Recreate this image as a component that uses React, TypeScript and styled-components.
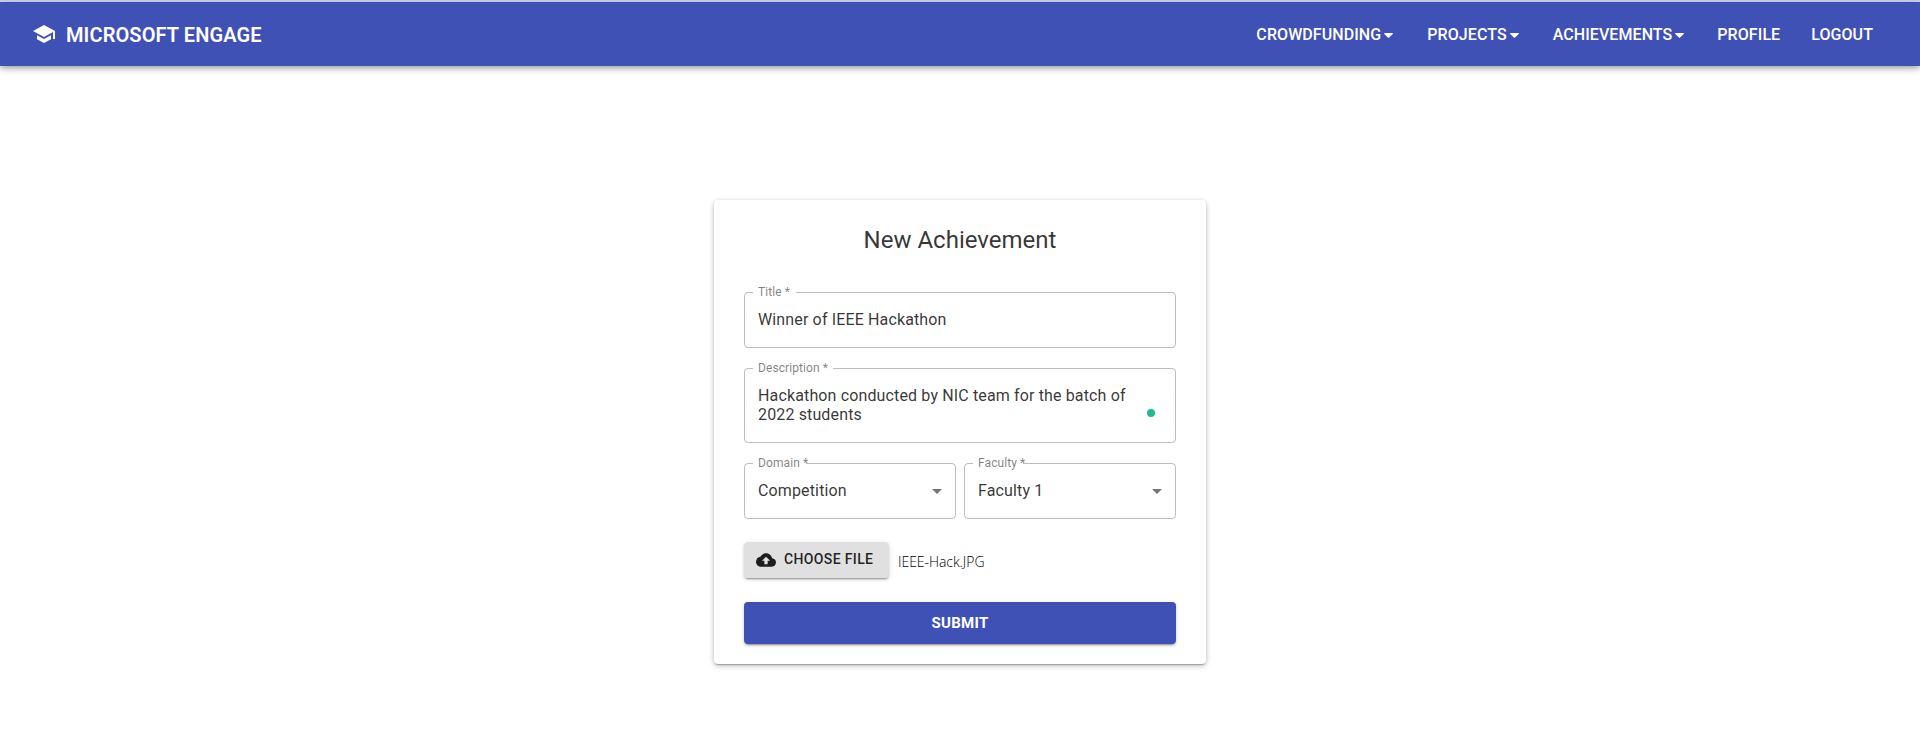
import React from 'react';
import styled, { createGlobalStyle } from 'styled-components';

const GlobalStyle = createGlobalStyle`
  *, *::before, *::after { box-sizing: border-box; }
  body {
    margin: 0;
    background: #fff;
    color: rgba(0, 0, 0, 0.8);
    font-family: Roboto, "Liberation Sans", sans-serif;
  }
`;

const Page = styled.div`
  min-height: 754px;
  border-top: 2px solid #cbd3e8;
`;

const AppBar = styled.header`
  display: flex;
  align-items: center;
  justify-content: space-between;
  height: 64px;
  padding: 0 47px 0 32px;
  background: #3f51b5;
  color: #fff;
  box-shadow: 0 2px 4px -1px rgba(0, 0, 0, 0.2), 0 4px 5px 0 rgba(0, 0, 0, 0.14),
    0 1px 10px 0 rgba(0, 0, 0, 0.12);
`;

const Brand = styled.div`
  display: flex;
  align-items: center;
  gap: 10px;
  font-size: 20px;
  font-weight: 600;
  line-height: 24px;
  letter-spacing: 0.1px;
  white-space: nowrap;
`;

const BrandName = styled.span`
  padding-top: 2px;
`;

const Nav = styled.nav`
  display: flex;
  align-items: center;
  padding-top: 2px;
`;

const NavLink = styled.a<{ $gap: number }>`
  display: flex;
  align-items: center;
  gap: 3px;
  margin-left: ${({ $gap }) => $gap}px;
  font-size: 16px;
  font-weight: 500;
  line-height: 24px;
  letter-spacing: 0.08px;
  white-space: nowrap;
`;

const Card = styled.form`
  display: flex;
  flex-direction: column;
  width: 492px;
  height: 464px;
  margin: 134px auto 0;
  padding: 20px 30px;
  border-radius: 4px;
  background: #fff;
  box-shadow: 0 2px 1px -1px rgba(0, 0, 0, 0.2), 0 1px 3px 0 rgba(0, 0, 0, 0.14),
    0 2px 6px 0 rgba(0, 0, 0, 0.2);
`;

const Heading = styled.h1`
  margin: 4px 0 36px;
  font-size: 24px;
  font-weight: 400;
  line-height: 32px;
  text-align: center;
`;

const Row = styled.div<{ $gap: number; $top: number }>`
  display: flex;
  gap: ${({ $gap }) => $gap}px;
  margin-top: ${({ $top }) => $top}px;
`;

const FieldBox = styled.div<{ $height: number }>`
  position: relative;
  display: flex;
  flex: 1;
  align-items: flex-start;
  justify-content: space-between;
  height: ${({ $height }) => $height}px;
  padding: 18px 14px;
`;

const Outline = styled.fieldset`
  position: absolute;
  inset: -5px 0 0;
  margin: 0;
  padding: 0 8px;
  border: 1px solid rgba(0, 0, 0, 0.26);
  border-radius: 4px;
  pointer-events: none;
`;

const Notch = styled.legend<{ $width: number }>`
  width: ${({ $width }) => $width}px;
  height: 11px;
  padding: 0;
`;

const Label = styled.label`
  position: absolute;
  top: -8px;
  left: 14px;
  color: rgba(0, 0, 0, 0.5);
  font-size: 12px;
  line-height: 16px;
  letter-spacing: 0.09px;
  white-space: nowrap;
`;

const Value = styled.div`
  font-size: 16px;
  line-height: 19px;
  letter-spacing: 0.14px;
  white-space: pre-line;
`;

const StatusDot = styled.span`
  position: absolute;
  right: 21px;
  bottom: 26px;
  width: 8px;
  height: 8px;
  border-radius: 50%;
  background: #1dbd92;
`;

const SelectArrow = styled.svg`
  width: 24px;
  height: 24px;
  margin: -2px -7px 0 0;
  fill: rgba(0, 0, 0, 0.54);
`;

const FileRow = styled.div`
  display: flex;
  align-items: center;
  gap: 9px;
  margin-top: 23px;
`;

const ChooseButton = styled.button`
  display: flex;
  align-items: center;
  gap: 8px;
  width: 145px;
  height: 36px;
  padding: 0 0 2px 12px;
  border: 0;
  border-radius: 4px;
  background: #e0e0e0;
  color: rgba(0, 0, 0, 0.87);
  font: 500 14px/24px Roboto, sans-serif;
  letter-spacing: 0.36px;
  white-space: nowrap;
  box-shadow: 0 3px 1px -2px rgba(0, 0, 0, 0.2), 0 2px 2px 0 rgba(0, 0, 0, 0.14),
    0 1px 5px 0 rgba(0, 0, 0, 0.12);
`;

const UploadIcon = styled.svg`
  width: 20px;
  height: 20px;
  margin-top: 2px;
  fill: currentColor;
`;

const FileName = styled.span`
  padding-top: 4px;
  color: #000;
  font-family: "Open Sans", "Noto Sans", sans-serif;
  font-size: 14px;
  font-weight: 300;
  line-height: 20px;
  letter-spacing: -0.06px;
`;

const SubmitButton = styled.button`
  height: 42px;
  margin-top: 24px;
  border: 0;
  border-radius: 4px;
  background: #3f51b5;
  color: #fff;
  font: 700 15px/24px Roboto, sans-serif;
  letter-spacing: 0.3px;
  box-shadow: 0 3px 1px -2px rgba(0, 0, 0, 0.2), 0 2px 2px 0 rgba(0, 0, 0, 0.14),
    0 1px 5px 0 rgba(0, 0, 0, 0.12);
`;

function Caret() {
  return (
    <svg width="9" height="5" viewBox="0 0 8 5" preserveAspectRatio="none" fill="#fff">
      <path d="M.6 0h6.8c.5 0 .8.6.4 1L4.5 4.5c-.3.3-.7.3-1 0L.2 1C-.2.6.1 0 .6 0z" />
    </svg>
  );
}

type FieldProps = {
  label: string;
  value: string;
  notch: number;
  height?: number;
  select?: boolean;
  checked?: boolean;
};

function Field({ label, value, notch, height = 56, select, checked }: FieldProps) {
  return (
    <FieldBox $height={height}>
      <Label>{label} *</Label>
      <Value>{value}</Value>
      {select && (
        <SelectArrow viewBox="0 0 24 24">
          <path d="M7 10l5 5 5-5z" />
        </SelectArrow>
      )}
      {checked && <StatusDot />}
      <Outline>
        <Notch $width={notch} />
      </Outline>
    </FieldBox>
  );
}

const links = [
  { text: 'CROWDFUNDING', menu: true, gap: 0 },
  { text: 'PROJECTS', menu: true, gap: 34 },
  { text: 'ACHIEVEMENTS', menu: true, gap: 34 },
  { text: 'PROFILE', menu: false, gap: 33 },
  { text: 'LOGOUT', menu: false, gap: 31 },
];

export default function App() {
  return (
    <Page>
      <GlobalStyle />
      <AppBar>
        <Brand>
          <svg width="24" height="24" viewBox="0 0 24 24" fill="#fff">
            <path d="M5 13.18v4L12 21l7-3.82v-4L12 17l-7-3.82zM12 3L1 9l11 6 9-4.91V17h2V9L12 3z" />
          </svg>
          <BrandName>MICROSOFT ENGAGE</BrandName>
        </Brand>
        <Nav>
          {links.map(({ text, menu, gap }) => (
            <NavLink key={text} $gap={gap}>
              <span>{text}</span>
              {menu && <Caret />}
            </NavLink>
          ))}
        </Nav>
      </AppBar>
      <Card>
        <Heading>New Achievement</Heading>
        <Row $gap={0} $top={0}>
          <Field label="Title" value="Winner of IEEE Hackathon" notch={43} />
        </Row>
        <Row $gap={0} $top={20}>
          <Field
            label="Description"
            value={'Hackathon conducted by NIC team for the batch of\n2022 students'}
            notch={80}
            height={75}
            checked
          />
        </Row>
        <Row $gap={8} $top={20}>
          <Field label="Domain" value="Competition" notch={53} select />
          <Field label="Faculty" value="Faculty 1" notch={50} select />
        </Row>
        <FileRow>
          <ChooseButton type="button">
            <UploadIcon viewBox="0 0 24 24">
              <path d="M19.35 10.04C18.67 6.59 15.64 4 12 4 9.11 4 6.6 5.64 5.35 8.04 2.34 8.36 0 10.91 0 14c0 3.31 2.69 6 6 6h13c2.76 0 5-2.24 5-5 0-2.64-2.05-4.78-4.65-4.96zM14 13v4h-4v-4H7l5-5 5 5h-3z" />
            </UploadIcon>
            <span>CHOOSE FILE</span>
          </ChooseButton>
          <FileName>IEEE-Hack.JPG</FileName>
        </FileRow>
        <SubmitButton type="button">SUBMIT</SubmitButton>
      </Card>
    </Page>
  );
}
